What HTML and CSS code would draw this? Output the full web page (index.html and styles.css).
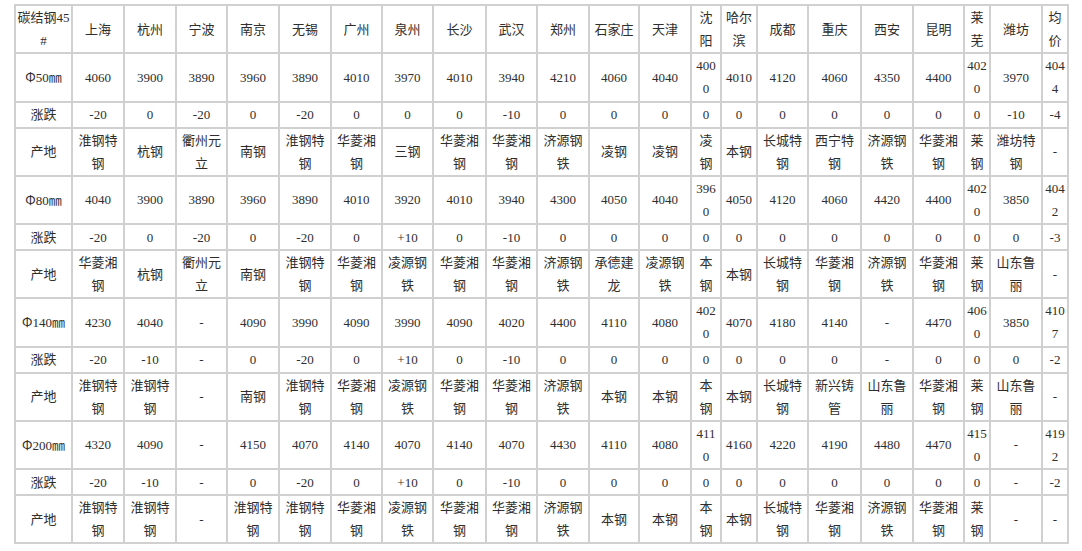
FILE: index.html
```html
<!DOCTYPE html>
<html lang="zh-CN">
<head>
<meta charset="utf-8">
<title>碳结钢45#</title>
<link rel="stylesheet" href="styles.css">
</head>
<body>
<table class="price-table">
<colgroup>
<col class="w57"><col class="w52"><col class="w52"><col class="w51"><col class="w52"><col class="w52"><col class="w51"><col class="w51"><col class="w53"><col class="w51"><col class="w52"><col class="w50"><col class="w52"><col class="w30"><col class="w36"><col class="w51"><col class="w53"><col class="w52"><col class="w51"><col class="w26"><col class="w52"><col class="w26">
</colgroup>
<tbody>
<tr class="head"><td class="label">碳结钢45#</td><td>上海</td><td>杭州</td><td>宁波</td><td>南京</td><td>无锡</td><td>广州</td><td>泉州</td><td>长沙</td><td>武汉</td><td>郑州</td><td>石家庄</td><td>天津</td><td>沈阳</td><td>哈尔滨</td><td>成都</td><td>重庆</td><td>西安</td><td>昆明</td><td>莱芜</td><td>潍坊</td><td>均价</td></tr>
<tr class="price"><td class="label"><span class="phi">Φ</span>50㎜</td><td>4060</td><td>3900</td><td>3890</td><td>3960</td><td>3890</td><td>4010</td><td>3970</td><td>4010</td><td>3940</td><td>4210</td><td>4060</td><td>4040</td><td>4000</td><td>4010</td><td>4120</td><td>4060</td><td>4350</td><td>4400</td><td>4020</td><td>3970</td><td>4044</td></tr>
<tr class="change"><td class="label">涨跌</td><td>-20</td><td>0</td><td>-20</td><td>0</td><td>-20</td><td>0</td><td>0</td><td>0</td><td>-10</td><td>0</td><td>0</td><td>0</td><td>0</td><td>0</td><td>0</td><td>0</td><td>0</td><td>0</td><td>0</td><td>-10</td><td>-4</td></tr>
<tr class="origin"><td class="label">产地</td><td>淮钢特钢</td><td>杭钢</td><td>衢州元立</td><td>南钢</td><td>淮钢特钢</td><td>华菱湘钢</td><td>三钢</td><td>华菱湘钢</td><td>华菱湘钢</td><td>济源钢铁</td><td>凌钢</td><td>凌钢</td><td>凌钢</td><td>本钢</td><td>长城特钢</td><td>西宁特钢</td><td>济源钢铁</td><td>华菱湘钢</td><td>莱钢</td><td>潍坊特钢</td><td>-</td></tr>
<tr class="price"><td class="label"><span class="phi">Φ</span>80㎜</td><td>4040</td><td>3900</td><td>3890</td><td>3960</td><td>3890</td><td>4010</td><td>3920</td><td>4010</td><td>3940</td><td>4300</td><td>4050</td><td>4040</td><td>3960</td><td>4050</td><td>4120</td><td>4060</td><td>4420</td><td>4400</td><td>4020</td><td>3850</td><td>4042</td></tr>
<tr class="change"><td class="label">涨跌</td><td>-20</td><td>0</td><td>-20</td><td>0</td><td>-20</td><td>0</td><td>+10</td><td>0</td><td>-10</td><td>0</td><td>0</td><td>0</td><td>0</td><td>0</td><td>0</td><td>0</td><td>0</td><td>0</td><td>0</td><td>0</td><td>-3</td></tr>
<tr class="origin"><td class="label">产地</td><td>华菱湘钢</td><td>杭钢</td><td>衢州元立</td><td>南钢</td><td>淮钢特钢</td><td>华菱湘钢</td><td>凌源钢铁</td><td>华菱湘钢</td><td>华菱湘钢</td><td>济源钢铁</td><td>承德建龙</td><td>凌源钢铁</td><td>本钢</td><td>本钢</td><td>长城特钢</td><td>华菱湘钢</td><td>济源钢铁</td><td>华菱湘钢</td><td>莱钢</td><td>山东鲁丽</td><td>-</td></tr>
<tr class="price"><td class="label"><span class="phi">Φ</span>140㎜</td><td>4230</td><td>4040</td><td>-</td><td>4090</td><td>3990</td><td>4090</td><td>3990</td><td>4090</td><td>4020</td><td>4400</td><td>4110</td><td>4080</td><td>4020</td><td>4070</td><td>4180</td><td>4140</td><td>-</td><td>4470</td><td>4060</td><td>3850</td><td>4107</td></tr>
<tr class="change"><td class="label">涨跌</td><td>-20</td><td>-10</td><td>-</td><td>0</td><td>-20</td><td>0</td><td>+10</td><td>0</td><td>-10</td><td>0</td><td>0</td><td>0</td><td>0</td><td>0</td><td>0</td><td>0</td><td>-</td><td>0</td><td>0</td><td>0</td><td>-2</td></tr>
<tr class="origin"><td class="label">产地</td><td>淮钢特钢</td><td>淮钢特钢</td><td>-</td><td>南钢</td><td>淮钢特钢</td><td>华菱湘钢</td><td>凌源钢铁</td><td>华菱湘钢</td><td>华菱湘钢</td><td>济源钢铁</td><td>本钢</td><td>本钢</td><td>本钢</td><td>本钢</td><td>长城特钢</td><td>新兴铸管</td><td>山东鲁丽</td><td>华菱湘钢</td><td>莱钢</td><td>山东鲁丽</td><td>-</td></tr>
<tr class="price"><td class="label"><span class="phi">Φ</span>200㎜</td><td>4320</td><td>4090</td><td>-</td><td>4150</td><td>4070</td><td>4140</td><td>4070</td><td>4140</td><td>4070</td><td>4430</td><td>4110</td><td>4080</td><td>4110</td><td>4160</td><td>4220</td><td>4190</td><td>4480</td><td>4470</td><td>4150</td><td>-</td><td>4192</td></tr>
<tr class="change"><td class="label">涨跌</td><td>-20</td><td>-10</td><td>-</td><td>0</td><td>-20</td><td>0</td><td>+10</td><td>0</td><td>-10</td><td>0</td><td>0</td><td>0</td><td>0</td><td>0</td><td>0</td><td>0</td><td>0</td><td>0</td><td>0</td><td>-</td><td>-2</td></tr>
<tr class="origin"><td class="label">产地</td><td>淮钢特钢</td><td>淮钢特钢</td><td>-</td><td>淮钢特钢</td><td>淮钢特钢</td><td>华菱湘钢</td><td>凌源钢铁</td><td>华菱湘钢</td><td>华菱湘钢</td><td>济源钢铁</td><td>本钢</td><td>本钢</td><td>本钢</td><td>本钢</td><td>长城特钢</td><td>华菱湘钢</td><td>济源钢铁</td><td>华菱湘钢</td><td>莱钢</td><td>-</td><td>-</td></tr>
</tbody>
</table>
</body>
</html>
```
FILE: styles.css
```css
html, body {
  margin: 0;
  padding: 0;
  background: #ffffff;
}

body {
  padding: 4px 0 0 14px;
  font-family: "Liberation Serif", "Noto Sans CJK SC", serif;
  font-size: 13px;
  color: #2e2e2e;
}

.price-table {
  border-collapse: collapse;
  table-layout: fixed;
  width: 1055px;
}

.price-table td {
  border: 2px solid #d0d0d0;
  padding: 0 2px;
  text-align: center;
  vertical-align: middle;
  line-height: 23px;
  word-break: break-all;
}

.price-table td.label {
  padding: 0;
}

.phi {
  font-family: "Noto Sans CJK SC", sans-serif;
}

.head td { height: 43px; }
.price td { height: 46.5px; }
.change td { height: 24px; }
.origin td { height: 43px; }

.w26 { width: 26px; }
.w30 { width: 30px; }
.w36 { width: 36px; }
.w50 { width: 50px; }
.w51 { width: 51px; }
.w52 { width: 52px; }
.w53 { width: 53px; }
.w57 { width: 57px; }
```
